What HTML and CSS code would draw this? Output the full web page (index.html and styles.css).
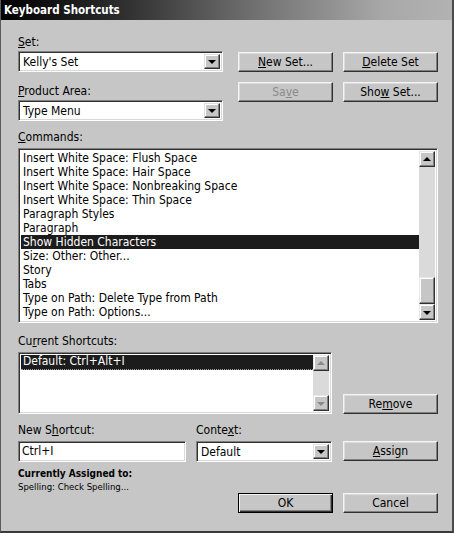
FILE: index.html
```html
<!DOCTYPE html>
<html>
<head>
<meta charset="utf-8">
<link rel="stylesheet" href="styles.css">
</head>
<body>
<div class="dialog">
  <div class="titlebar">Keyboard Shortcuts</div>
  <div class="content">
    <div class="top">
      <div class="left">
        <div class="label"><u>S</u>et:</div>
        <div class="field combo"><span class="val">Kelly's Set</span><span class="dropbtn"><span class="tri-down"></span></span></div>
        <div class="label gap13"><u>P</u>roduct Area:</div>
        <div class="field combo"><span class="val">Type Menu</span><span class="dropbtn"><span class="tri-down"></span></span></div>
      </div>
      <div class="btngrid">
        <div class="btn"><u>N</u>ew Set...</div>
        <div class="btn"><u>D</u>elete Set</div>
        <div class="btn disabled">Sa<u>v</u>e</div>
        <div class="btn">Sho<u>w</u> Set...</div>
      </div>
    </div>

    <div class="label cmdlabel"><u>C</u>ommands:</div>
    <div class="field listbox commands">
      <div class="items">
        <div class="item">Insert White Space: Flush Space</div>
        <div class="item">Insert White Space: Hair Space</div>
        <div class="item">Insert White Space: Nonbreaking Space</div>
        <div class="item">Insert White Space: Thin Space</div>
        <div class="item">Paragraph Styles</div>
        <div class="item">Paragraph</div>
        <div class="item sel">Show Hidden Characters</div>
        <div class="item">Size: Other: Other...</div>
        <div class="item">Story</div>
        <div class="item">Tabs</div>
        <div class="item">Type on Path: Delete Type from Path</div>
        <div class="item">Type on Path: Options...</div>
      </div>
      <div class="vscroll">
        <div class="sbtn"><span class="tri-up"></span></div>
        <div class="track">
          <div class="thumb"></div>
        </div>
        <div class="sbtn"><span class="tri-down"></span></div>
      </div>
    </div>

    <div class="label curlabel">Cu<u>r</u>rent Shortcuts:</div>
    <div class="currow">
      <div class="field listbox current">
        <div class="items">
          <div class="item sel focus">Default: Ctrl+Alt+I</div>
        </div>
        <div class="vscroll off">
          <div class="sbtn"><span class="tri-up"></span></div>
          <div class="track"></div>
          <div class="sbtn"><span class="tri-down"></span></div>
        </div>
      </div>
      <div class="btn">Re<u>m</u>ove</div>
    </div>

    <div class="nsrow">
      <div class="nscol">
        <div class="label">New S<u>h</u>ortcut:</div>
        <div class="field input">Ctrl+I</div>
      </div>
      <div class="ctxcol">
        <div class="label">Conte<u>x</u>t:</div>
        <div class="field combo"><span class="val">Default</span><span class="dropbtn"><span class="tri-down"></span></span></div>
      </div>
      <div class="btn assign"><u>A</u>ssign</div>
    </div>

    <div class="bottomrow">
      <div class="info">
        <div class="assigned">Currently Assigned to:</div>
        <div class="spell">Spelling: Check Spelling...</div>
      </div>
      <div class="okrow">
        <div class="btn default">OK</div>
        <div class="btn">Cancel</div>
      </div>
    </div>
  </div>
</div>
</body>
</html>
```

FILE: styles.css
```css
* { box-sizing: border-box; }
html, body { margin: 0; padding: 0; }
body {
  width: 454px;
  height: 533px;
  background: #c6c6c6;
  font-family: "DejaVu Sans Condensed", "DejaVu Sans", "Liberation Sans", sans-serif;
  font-size: 12px;
  color: #000;
  overflow: hidden;
}
u { text-decoration: underline; text-underline-offset: 1px; }

.dialog {
  width: 454px;
  height: 533px;
  background: #c6c6c6;
  border-left: 1px solid #5a5a5a;
  border-right: 2px solid #4a4a4a;
  border-bottom: 2px solid #3a3a3a;
  display: flex;
  flex-direction: column;
}

.titlebar {
  height: 20px;
  flex: none;
  background: linear-gradient(to right, #000 0%, #2a2a2a 25%, #6e6e6e 55%, #a8a8a8 85%, #b2b2b2 100%);
  color: #fff;
  font-weight: bold;
  font-size: 11.5px;
  line-height: 20px;
  padding-left: 3px;
}

.content {
  padding: 16px 14px 0 17px;
  display: flex;
  flex-direction: column;
}

.label { height: 13px; line-height: 13px; margin-bottom: 2px; white-space: nowrap; }
.gap13 { margin-top: 13px; }

/* sunken field */
.field {
  background: #fff;
  border: 1px solid;
  border-color: #808080 #fff #fff #808080;
  box-shadow: inset 1px 1px 0 #303030, inset -1px -1px 0 #d8d8d8;
}

.top { display: flex; }
.left { width: 205px; display: flex; flex-direction: column; }
.combo {
  height: 21px;
  display: flex;
  align-items: stretch;
  padding: 2px;
}
.combo .val { flex: 1; line-height: 17px; padding-left: 2px; white-space: nowrap; }
.dropbtn {
  width: 16px;
  flex: none;
  background: #c6c6c6;
  border: 1px solid;
  border-color: #e0e0e0 #303030 #303030 #e0e0e0;
  box-shadow: inset -1px -1px 0 #808080, inset 1px 1px 0 #fff;
  display: flex;
  align-items: center;
  justify-content: center;
}

.tri-down, .tri-up {
  width: 0; height: 0;
  border-left: 4px solid transparent;
  border-right: 4px solid transparent;
}
.tri-down { border-top: 4px solid #000; margin-top: 1px; }
.tri-up { border-bottom: 4px solid #000; margin-bottom: 1px; }

.btngrid {
  margin-left: 15px;
  margin-top: 16px;
  display: grid;
  grid-template-columns: 95px 95px;
  column-gap: 10px;
  row-gap: 10px;
  align-content: start;
}

.btn {
  height: 20px;
  width: 95px;
  background: #c6c6c6;
  border: 1px solid;
  border-color: #f4f4f4 #303030 #303030 #f4f4f4;
  box-shadow: inset -1px -1px 0 #808080, inset 1px 1px 0 #dcdcdc;
  text-align: center;
  line-height: 18px;
  white-space: nowrap;
}
.btn.disabled { color: #8a8a8a; }
.btn.default {
  border: 1px solid #000;
  box-shadow: inset 1px 1px 0 #f4f4f4, inset -1px -1px 0 #303030, inset -2px -2px 0 #808080;
}

.cmdlabel { margin-top: 10px; margin-bottom: 4px; }

.listbox {
  display: flex;
  padding: 2px;
}
.listbox .items { flex: 1; overflow: hidden; }
.commands { height: 175px; width: 420px; }
.item {
  height: 14px;
  line-height: 14px;
  padding-left: 2px;
  white-space: nowrap;
}
.item.sel { background: #1c1c1c; color: #fff; }
.item.focus { border-bottom: 1px dotted #9a9a9a; line-height: 13px; height: 15px; }

.vscroll {
  width: 16px;
  flex: none;
  display: flex;
  flex-direction: column;
  background: #dadada;
}
.sbtn {
  height: 16px;
  flex: none;
  background: #c6c6c6;
  border: 1px solid;
  border-color: #e8e8e8 #303030 #303030 #e8e8e8;
  box-shadow: inset -1px -1px 0 #808080, inset 1px 1px 0 #fff;
  display: flex;
  align-items: center;
  justify-content: center;
}
.track { flex: 1; display: flex; flex-direction: column; justify-content: flex-end; }
.thumb {
  height: 27px;
  background: #c6c6c6;
  border: 1px solid;
  border-color: #e8e8e8 #303030 #303030 #e8e8e8;
  box-shadow: inset -1px -1px 0 #808080, inset 1px 1px 0 #fff;
}
.vscroll.off .tri-up { border-bottom-color: #8a8a8a; }
.vscroll.off .tri-down { border-top-color: #8a8a8a; }

.curlabel { margin-top: 12px; margin-bottom: 4px; }
.currow { display: flex; align-items: flex-end; }
.current { width: 314px; height: 62px; margin-right: 11px; }

.nsrow { display: flex; align-items: flex-end; margin-top: 10px; }
.nscol { width: 168px; display: flex; flex-direction: column; }
.nscol .label, .ctxcol .label { margin-bottom: 4px; }
.input { height: 21px; line-height: 19px; padding-left: 3px; }
.ctxcol { width: 136px; margin-left: 10px; margin-right: 11px; display: flex; flex-direction: column; }
.ctxcol .combo { height: 21px; }
.assign { margin-bottom: 1px; }

.bottomrow { display: flex; justify-content: space-between; margin-top: 5px; }
.info { font-size: 10px; }
.assigned { font-weight: bold; height: 13px; line-height: 13px; }
.spell { height: 13px; line-height: 13px; font-size: 9.5px; }
.okrow { display: flex; gap: 10px; margin-top: 26px; }
```
